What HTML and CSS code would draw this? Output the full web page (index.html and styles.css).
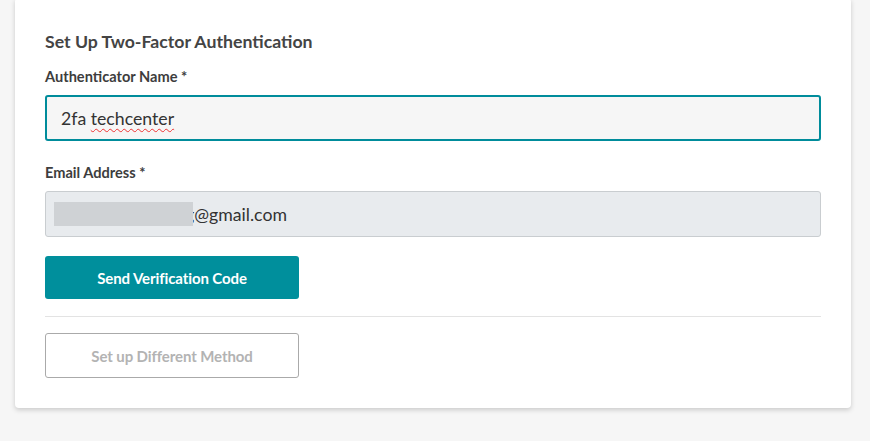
FILE: index.html
```html
<!DOCTYPE html>
<html>
<head>
<meta charset="utf-8">
<link rel="stylesheet" href="styles.css">
</head>
<body>
<div class="card">
  <h2 class="title">Set Up Two-Factor Authentication</h2>
  <label class="label">Authenticator Name *</label>
  <div class="input active"><span class="typed">2fa <span class="spell">techcenter</span></span></div>
  <label class="label email-label">Email Address *</label>
  <div class="input disabled"><span class="mask"></span><span class="typed">g@gmail.com</span></div>
  <button class="btn primary">Send Verification Code</button>
  <hr class="divider">
  <button class="btn secondary">Set up Different Method</button>
</div>
</body>
</html>
```
FILE: styles.css
```css
html, body {
  margin: 0;
  padding: 0;
  background: #f6f6f6;
  font-family: Lato, "Open Sans", sans-serif;
}
body {
  height: 441px;
  overflow: hidden;
}
.card {
  margin: -2px 19px 0 15px;
  background: #fff;
  border-radius: 4px;
  box-shadow: 0 2px 5px rgba(0,0,0,0.18);
  padding: 33px 30px 30px 30px;
  display: flex;
  flex-direction: column;
  align-items: flex-start;
}
.title {
  margin: 0;
  font-size: 17.7px;
  font-weight: 700;
  color: #444;
  line-height: 22px;
}
.label {
  display: block;
  margin-top: 15px;
  font-size: 14.6px;
  font-weight: 700;
  color: #3d3d3d;
  line-height: 18px;
}
.email-label {
  margin-top: 23px;
}
.input {
  box-sizing: border-box;
  width: 100%;
  margin-top: 9px;
  height: 46px;
  border-radius: 3px;
  display: flex;
  align-items: center;
  font-size: 17.7px;
  color: #333;
}
.input.active {
  border: 2px solid #008c9b;
  background: #f6f6f6;
  padding-left: 14px;
}
.input.disabled {
  border: 1px solid #c9cdd0;
  background: #e8ebee;
  padding-left: 8px;
}
.spell {
  text-decoration: underline wavy #e33;
  text-decoration-thickness: 1px;
  text-underline-offset: 3px;
}
.mask {
  position: relative;
  z-index: 1;
  display: inline-block;
  width: 139px;
  height: 24px;
  background: #cfd2d5;
  margin-right: -8px;
}
.btn {
  box-sizing: border-box;
  width: 254px;
  height: 43px;
  border-radius: 3px;
  font-family: Lato, "Open Sans", sans-serif;
  font-size: 15px;
  font-weight: 700;
  letter-spacing: -0.1px;
}
.primary {
  margin-top: 19px;
  border: none;
  background: #008f9c;
  color: #fff;
}
.divider {
  align-self: stretch;
  margin: 17px 0 0 0;
  border: none;
  border-top: 1px solid #e3e3e3;
  height: 0;
}
.secondary {
  margin-top: 16px;
  height: 45px;
  border: 1px solid #aaa;
  background: #fff;
  color: #b3b3b3;
}
```
